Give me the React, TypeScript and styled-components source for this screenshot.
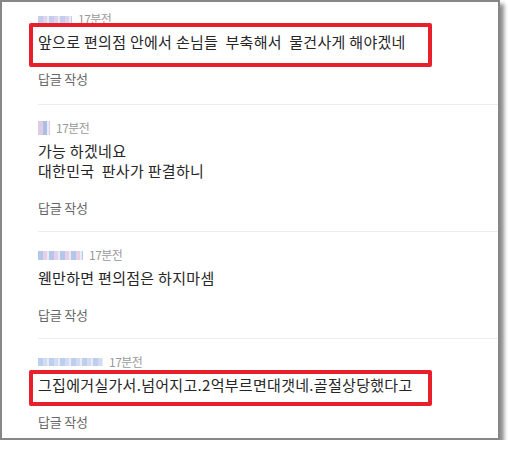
import React from 'react';
import styled, { createGlobalStyle } from 'styled-components';

// Comment list screenshot: a framed panel with four comments,
// two of them marked with a red annotation box.

const GlobalStyle = createGlobalStyle`
  html, body {
    margin: 0;
    padding: 0;
    background: #ffffff;
  }
  body {
    font-family: "Noto Sans CJK KR", "Noto Sans", sans-serif;
  }
`;

const Frame = styled.div`
  box-sizing: border-box;
  width: 500px;
  height: 440px;
  border: 2px solid #878787;
  background: #ffffff;
  box-shadow: 4px 4px 4px rgba(0, 0, 0, 0.45);
  overflow: hidden;
`;

const List = styled.ul`
  list-style: none;
  margin: 0;
  padding: 0 0 0 36px;
`;

const Comment = styled.li<{ $first?: boolean }>`
  padding: ${p => (p.$first ? '8px 0 16px' : '14px 0 14px')};
  border-bottom: 1px solid #ededed;

  &:last-child {
    border-bottom: none;
    padding-bottom: 6px;
  }
`;

const Meta = styled.div`
  display: flex;
  align-items: center;
  gap: 6px;
  height: 18px;
`;

const BlurName = styled.span<{ $w: number; $h: number; $c1: string; $c2: string }>`
  display: inline-block;
  width: ${p => p.$w}px;
  height: ${p => p.$h}px;
  background: repeating-linear-gradient(
    90deg,
    ${p => p.$c1} 0 5px,
    ${p => p.$c2} 5px 9px,
    #e4e8f4 9px 11px
  );
  filter: blur(0.6px);
  opacity: 0.85;
`;

const Time = styled.span`
  font-size: 12px;
  line-height: 18px;
  color: #9a9a9a;
  letter-spacing: -0.5px;
`;

const Body = styled.div`
  position: relative;
  margin-top: 4px;
  font-size: 15px;
  line-height: 20px;
  color: #262626;
  white-space: pre-wrap;
  letter-spacing: 0.3px;
`;

const Highlight = styled.span<{ $top: number; $bottom: number }>`
  position: absolute;
  left: -9px;
  width: 403px;
  top: ${p => p.$top}px;
  bottom: ${p => p.$bottom}px;
  border: 4px solid #e8202b;
  border-radius: 2px;
  box-sizing: border-box;
  pointer-events: none;
`;

const Reply = styled.div`
  margin-top: 18px;
  font-size: 13px;
  line-height: 18px;
  color: #666666;
  letter-spacing: -0.2px;
`;

type Item = {
  name: { w: number; h: number; c1: string; c2: string };
  text: string;
  box?: { top: number; bottom: number };
};

const items: Item[] = [
  {
    name: { w: 34, h: 7, c1: '#b9c6ea', c2: '#d6cdea' },
    text: '앞으로 편의점 안에서 손님들  부축해서  물건사게 해야겠네',
    box: { top: -9, bottom: -15 },
  },
  {
    name: { w: 12, h: 14, c1: '#d8c4e2', c2: '#9fb2e4' },
    text: '가능 하겠네요\n대한민국  판사가 판결하니',
  },
  {
    name: { w: 45, h: 9, c1: '#a9bde8', c2: '#e2c8e4' },
    text: '웬만하면 편의점은 하지마셈',
  },
  {
    name: { w: 65, h: 8, c1: '#b3c6ec', c2: '#c9d6f0' },
    text: '그집에거실가서.넘어지고.2억부르면대갯네.골절상당했다고',
    box: { top: -5, bottom: -11 },
  },
];

export default function App() {
  return (
    <>
      <GlobalStyle />
      <Frame>
        <List>
          {items.map((it, i) => (
            <Comment key={i} $first={i === 0}>
              <Meta>
                <BlurName $w={it.name.w} $h={it.name.h} $c1={it.name.c1} $c2={it.name.c2} />
                <Time>17분전</Time>
              </Meta>
              <Body>
                {it.text}
                {it.box && <Highlight $top={it.box.top} $bottom={it.box.bottom} />}
              </Body>
              <Reply>답글 작성</Reply>
            </Comment>
          ))}
        </List>
      </Frame>
    </>
  );
}
